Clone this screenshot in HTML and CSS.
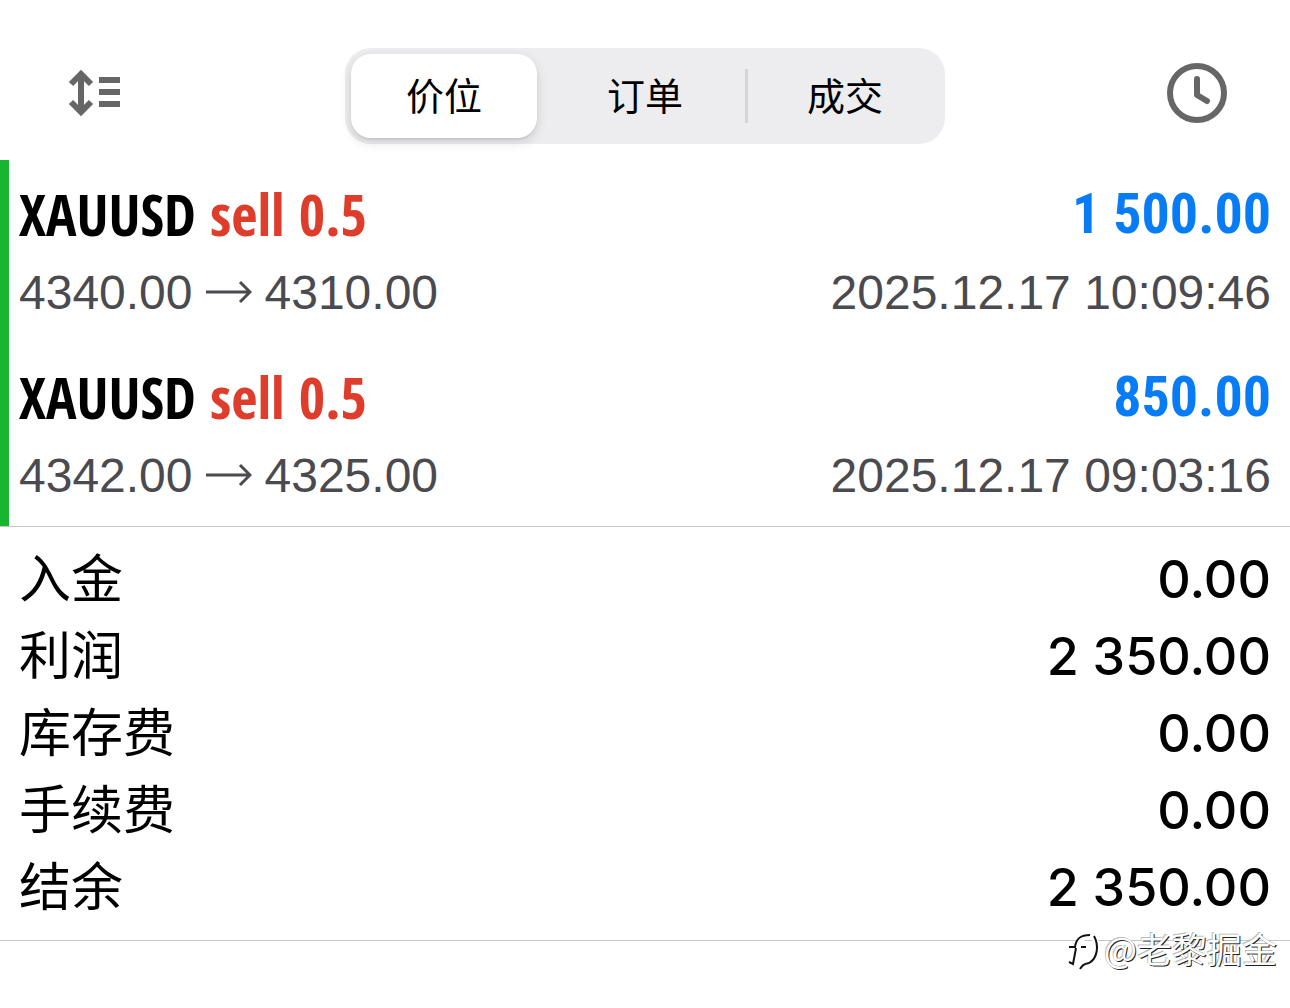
FILE: index.html
```html
<!DOCTYPE html>
<html lang="zh-CN">
  <head>
    <meta charset="utf-8" />
    <meta name="viewport" content="width=device-width, initial-scale=1" />
    <title>历史</title>
    <link rel="stylesheet" href="styles.css">
  </head>
  <body>
    <header class="toolbar">
      <button class="icon-button" type="button" aria-label="排序">
        <svg width="56" height="48" viewBox="0 0 56 48" fill="none" stroke="#666" stroke-width="6">
          <path d="M14 4v40M4 15L14 5l10 10M4 33l10 10 10-10" />
          <path d="M32 11h21M32 23h21M32 35h21" />
        </svg>
      </button>
      <nav class="segments">
        <button class="segment selected" type="button">价位</button>
        <button class="segment" type="button">订单</button>
        <button class="segment" type="button">成交</button>
      </nav>
      <button class="icon-button" type="button" aria-label="时间">
        <svg width="60" height="60" viewBox="0 0 60 60" fill="none" stroke="#666" stroke-width="6" stroke-linecap="round" stroke-linejoin="round">
          <circle cx="30" cy="30" r="27" />
          <path d="M30 16v16l10 6" />
        </svg>
      </button>
    </header>

    <main>
      <section class="deals">
        <article class="deal">
          <div class="line title">
            <span>XAUUSD <span class="sell">sell 0.5</span></span>
            <span class="profit">1 500.00</span>
          </div>
          <div class="line detail">
            <span class="prices">4340.00
              <svg width="46" height="24" viewBox="0 0 46 24" fill="none" stroke="#4a4a4f" stroke-width="3"><path d="M0 12h44M34 2l10 10-10 10" /></svg>
              4310.00</span>
            <time>2025.12.17 10:09:46</time>
          </div>
        </article>
        <article class="deal">
          <div class="line title">
            <span>XAUUSD <span class="sell">sell 0.5</span></span>
            <span class="profit">850.00</span>
          </div>
          <div class="line detail">
            <span class="prices">4342.00
              <svg width="46" height="24" viewBox="0 0 46 24" fill="none" stroke="#4a4a4f" stroke-width="3"><path d="M0 12h44M34 2l10 10-10 10" /></svg>
              4325.00</span>
            <time>2025.12.17 09:03:16</time>
          </div>
        </article>
      </section>

      <dl class="summary">
        <div class="line"><dt>入金</dt><dd>0.00</dd></div>
        <div class="line"><dt>利润</dt><dd>2 350.00</dd></div>
        <div class="line"><dt>库存费</dt><dd>0.00</dd></div>
        <div class="line"><dt>手续费</dt><dd>0.00</dd></div>
        <div class="line"><dt>结余</dt><dd>2 350.00</dd></div>
      </dl>
    </main>

    <div class="watermark">
      <svg width="34" height="40" viewBox="0 0 34 40" fill="none">
        <path stroke="#fff" stroke-width="6" d="M4 31l5 1 3-17M4 15h9C13 7 18 3 26 3c7 9 6 24-3 28-4 1-7 3-9 6M16 14h6" />
        <path stroke="#111" stroke-width="2" d="M3 30l4 2 3-16M3 15h6C10 7 14 3 24 3M28 4c5 9 4 22-5 27-6 1-7 3-9 6M15 15h5" />
      </svg>
      <span>@老黎掘金</span>
    </div>
  </body>
</html>
```

FILE: styles.css
```css
* {
  box-sizing: border-box;
}

body {
  position: relative;
  margin: 0;
  min-height: 100vh;
  background: #fff;
  color: #000;
  font-family: Inter, "Noto Sans CJK SC", sans-serif;
}

button {
  border: 0;
  padding: 0;
  background: none;
  color: inherit;
  font: inherit;
}

svg {
  display: block;
}

.toolbar {
  display: flex;
  align-items: center;
  justify-content: space-between;
  height: 160px;
  padding: 26px 63px 0 67px;
}

.icon-button {
  display: flex;
}

.segments {
  display: grid;
  grid-template-columns: repeat(3, 1fr);
  width: 600px;
  height: 96px;
  margin-top: 6px;
  border-radius: 26px;
  background: #ededef;
}

.segment {
  font-size: 38px;
  line-height: 84px;
}

.selected {
  margin: 6px 8px 6px 6px;
  border-radius: 20px;
  background: #fff;
  box-shadow: 0 4px 12px #0002, 0 2px 2px #0001;
}

.segment:last-child {
  background: linear-gradient(#d5d5d8, #d5d5d8) left center / 3px 54px no-repeat;
}

.deals {
  border-left: 9px solid #18b530;
}

.deal {
  padding: 16px 19px 11px 10px;
}

.line {
  display: flex;
  align-items: center;
  justify-content: space-between;
}

.title {
  height: 76px;
  font: bold 57px "Open Sans Condensed", "Roboto Condensed", sans-serif;
}

.sell {
  color: #df3d2c;
}

.profit {
  color: #087cf5;
  font-family: "Roboto Condensed", "Open Sans Condensed", sans-serif;
  font-size: 56px;
}

.detail {
  height: 80px;
  color: #4a4a4f;
  font: 48px "Liberation Sans", Arial, sans-serif;
}

.prices {
  display: flex;
  align-items: center;
  gap: 13px;
}

.summary {
  margin: 0;
  padding: 14px 19px;
  border-top: 1px solid #c6c6c8;
  border-bottom: 1px solid #c6c6c8;
}

.summary .line {
  font-size: 52px;
  line-height: 77px;
}

.summary dd {
  margin: 0;
  font-weight: 500;
}

/* credit drawn over the bottom corner */
.watermark {
  position: absolute;
  top: 932px;
  right: 13px;
  display: flex;
  align-items: center;
  gap: 4px;
  color: #fff;
  font-family: "Noto Sans CJK SC", sans-serif;
  font-size: 35px;
  line-height: 26px;
  text-shadow: 1px 1px 0 #222, -1px -1px 0 #bbb;
}

.watermark span {
  padding-bottom: 8px;
}
```
